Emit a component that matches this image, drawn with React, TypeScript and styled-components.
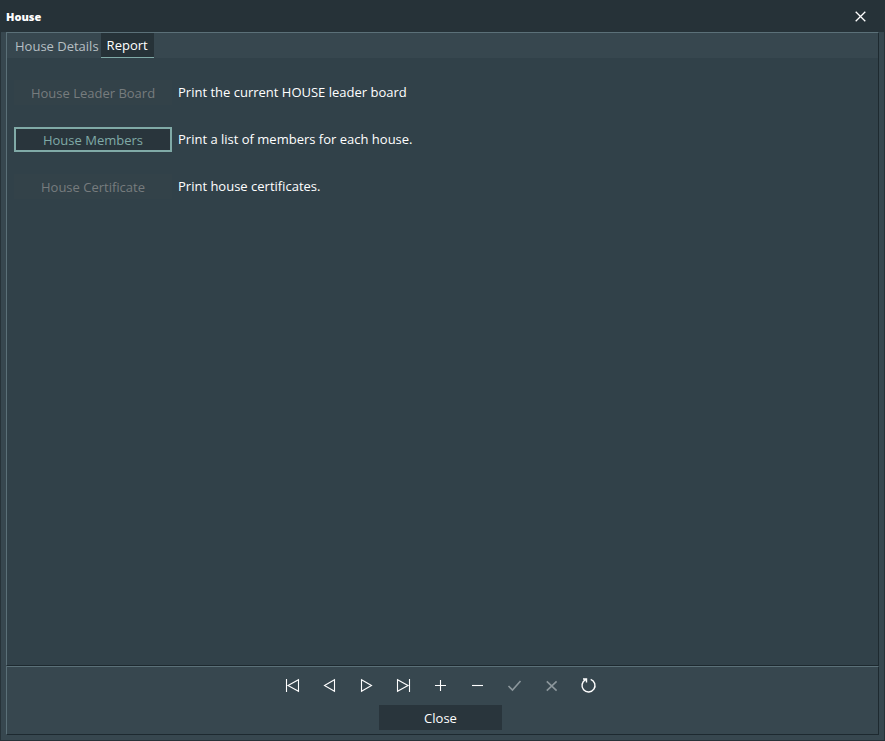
import React, { useState } from "react";
import styled, { createGlobalStyle } from "styled-components";

const color = {
  title: "#263238",
  frame: "#37474f",
  page: "#314149",
  button: "#29353c",
  light: "#5b7078",
  dark: "#1d292f",
  accent: "#80aaa7",
  text: "#ffffff",
  muted: "#777c7e",
};

const GlobalStyle = createGlobalStyle`
  *, *::before, *::after { box-sizing: border-box; }
  body {
    margin: 0;
    background: ${color.frame};
    color: ${color.text};
    font: 13px/18px "Open Sans", "Noto Sans", sans-serif;
  }
  button { font: inherit; border: 0; padding: 0; margin: 0; border-radius: 0; }
`;

const Window = styled.div`
  display: flex;
  flex-direction: column;
  min-height: 100vh;
  padding-bottom: 5px;
  border: 1px solid ${color.title};
  border-top: 0;
  background: ${color.frame};
`;

const TitleBar = styled.header`
  display: flex;
  align-items: center;
  justify-content: space-between;
  height: 32px;
  padding: 0 16px 0 5px;
  background: ${color.title};
`;

const Title = styled.h1`
  margin: 0;
  padding-top: 2px;
  font-size: 11px;
  line-height: 16px;
  font-weight: 800;
`;

const CloseIconButton = styled.button`
  display: grid;
  place-items: center;
  width: 16px;
  height: 16px;
  background: transparent;
  color: ${color.text};
`;

const Panel = styled.main`
  display: flex;
  flex: 1;
  flex-direction: column;
  margin: 0 5px;
  border: 1px solid ${color.light};
  border-right-color: ${color.dark};
  border-bottom-color: ${color.dark};
`;

const TabList = styled.div`
  display: flex;
  height: 25px;
  padding-left: 2px;
`;

const Tab = styled.button<{ $active: boolean }>`
  padding: ${(p) => (p.$active ? "0 6px 1px" : "2px 2px 0 6px")};
  background: ${(p) => (p.$active ? color.title : "transparent")};
  color: ${(p) => (p.$active ? color.text : "#b6bfc3")};
  border-bottom: 1px solid ${(p) => (p.$active ? color.accent : "transparent")};
`;

const TabPage = styled.section`
  flex: 1;
  padding: 22px 7px;
  background: ${color.page};
`;

const ReportList = styled.ul`
  display: flex;
  flex-direction: column;
  gap: 22px;
  margin: 0;
  padding: 0;
  list-style: none;
`;

const ReportRow = styled.li`
  display: flex;
  align-items: center;
  gap: 6px;
`;

const ReportButton = styled.button`
  width: 158px;
  height: 25px;
  padding-top: 1px;
  border: 2px solid ${color.accent};
  background: ${color.button};
  color: ${color.accent};

  &:disabled {
    border-color: transparent;
    background: #334249;
    color: ${color.muted};
  }
`;

const Description = styled.label`
  padding-bottom: 1px;
`;

const Footer = styled.footer`
  display: flex;
  flex-direction: column;
  align-items: center;
  margin: 0 5px;
  padding: 6px 4px 4px 0;
  border: 1px solid ${color.light};
  border-right-color: ${color.dark};
  border-bottom-color: ${color.dark};
`;

const Navigator = styled.div`
  display: flex;
  margin-bottom: 8px;
`;

const NavButton = styled.button`
  display: grid;
  place-items: center;
  width: 37px;
  height: 24px;
  background: transparent;
  color: ${color.text};

  &:disabled { color: #8c979c; }
`;

const CloseButton = styled.button`
  width: 123px;
  height: 25px;
  padding-top: 1px;
  background: ${color.button};
  color: ${color.text};
`;

const Icon = styled.svg`
  display: block;
  fill: none;
  stroke: currentColor;
  stroke-width: 1.1;
`;

const reports = [
  { id: "leader-board", name: "House Leader Board", text: "Print the current HOUSE leader board", enabled: false },
  { id: "members", name: "House Members", text: "Print a list of members for each house.", enabled: true },
  { id: "certificate", name: "House Certificate", text: "Print house certificates.", enabled: false },
];

const tabs = ["House Details", "Report"];

const actions = [
  { label: "First record", path: "M2.5 2v13M14.5 2.7v11.6L4 8.5z" },
  { label: "Previous record", path: "M13.5 2.7v11.6L3.5 8.5z" },
  { label: "Next record", path: "M3.5 2.7v11.6L13.5 8.5z" },
  { label: "Last record", path: "M14.5 2v13M2.5 2.7v11.6L13 8.5z" },
  { label: "Insert record", path: "M8.5 3v11M3 8.5h11" },
  { label: "Delete record", path: "M3 8.5h11" },
  { label: "Post edit", path: "M2.5 9l4 4L14.5 4", disabled: true, width: 1.6 },
  { label: "Cancel edit", path: "M3.8 4.3l9.8 9.4M13.6 4.3l-9.8 9.4", disabled: true, width: 1.6 },
  { label: "Refresh data", path: "M10.7 2.4A6.5 6.5 0 1 1 5.6 2.7M3 2h3.5v3.5", width: 1.4 },
];

export default function App() {
  const [tab, setTab] = useState("Report");
  return (
    <>
      <GlobalStyle />
      <Window>
        <TitleBar>
          <Title>House</Title>
          <CloseIconButton type="button" aria-label="Close window">
            <Icon width="11" height="11" viewBox="0 0 11 11">
              <path d="M.7.7l9.6 9.6M10.3.7L.7 10.3" strokeWidth="1.3" />
            </Icon>
          </CloseIconButton>
        </TitleBar>
        <Panel>
          <TabList role="tablist">
            {tabs.map((name) => (
              <Tab
                key={name}
                type="button"
                role="tab"
                aria-selected={tab === name}
                $active={tab === name}
                onClick={() => setTab(name)}
              >
                {name}
              </Tab>
            ))}
          </TabList>
          <TabPage role="tabpanel" aria-label={tab}>
            {tab === "Report" && (
              <ReportList>
                {reports.map((r) => (
                  <ReportRow key={r.id}>
                    <ReportButton id={r.id} type="button" disabled={!r.enabled}>
                      {r.name}
                    </ReportButton>
                    <Description htmlFor={r.id}>{r.text}</Description>
                  </ReportRow>
                ))}
              </ReportList>
            )}
          </TabPage>
        </Panel>
        <Footer>
          <Navigator role="toolbar" aria-label="Record navigation">
            {actions.map((a) => (
              <NavButton key={a.label} type="button" aria-label={a.label} disabled={a.disabled}>
                <Icon width="17" height="17" viewBox="0 0 17 17">
                  <path d={a.path} strokeWidth={a.width} />
                </Icon>
              </NavButton>
            ))}
          </Navigator>
          <CloseButton type="button">Close</CloseButton>
        </Footer>
      </Window>
    </>
  );
}
